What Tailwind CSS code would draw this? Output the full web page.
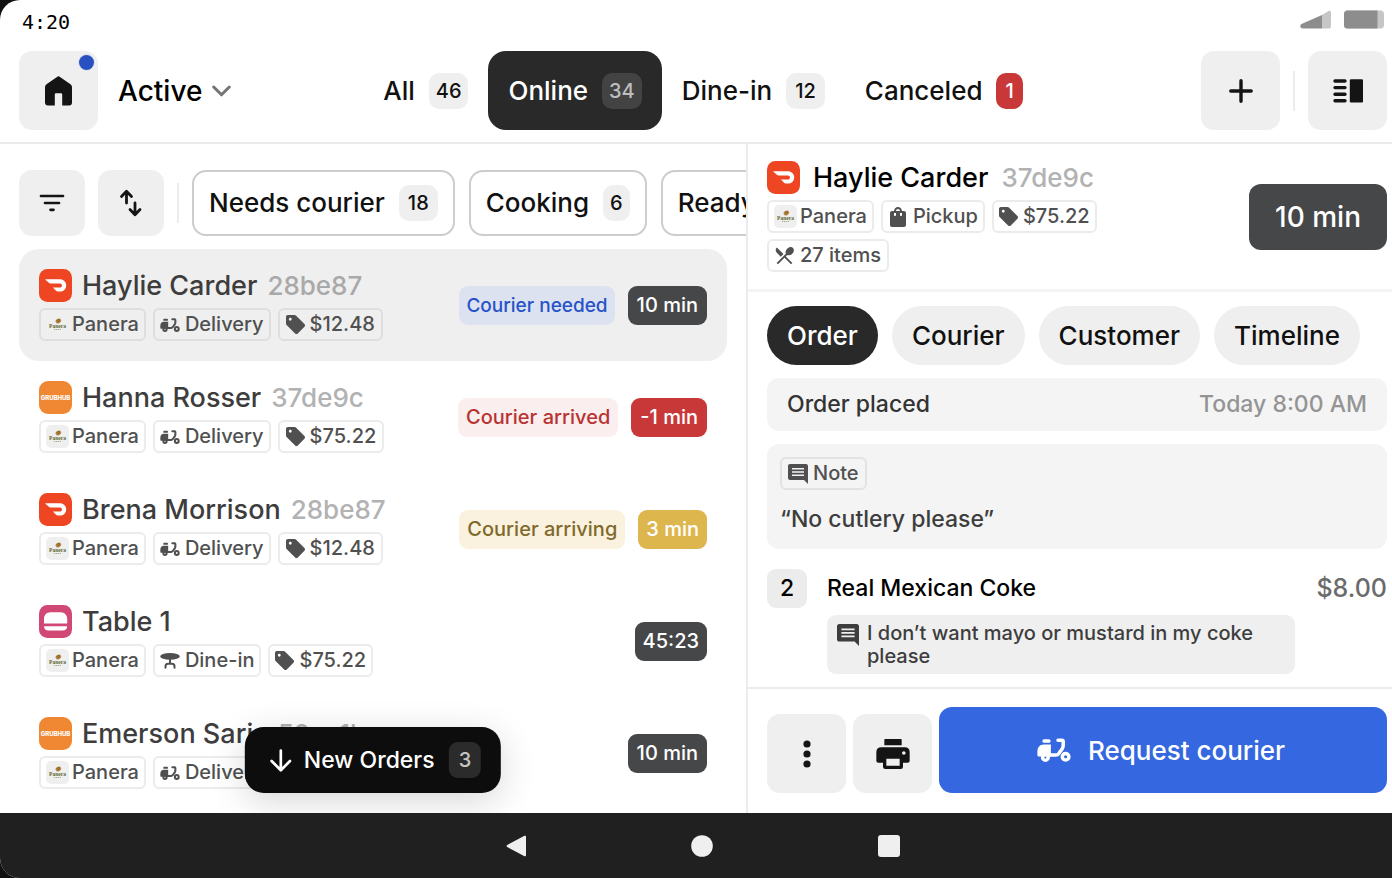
<!DOCTYPE html>
<html lang="en">
<head>
<meta charset="utf-8">
<meta name="viewport" content="width=device-width, initial-scale=1">
<title>Orders</title>
<script src="https://cdn.jsdelivr.net/npm/@tailwindcss/browser@4"></script>
</head>
<body class="bg-[#111] font-[Inter,sans-serif] font-medium text-[#111]">
<svg class="hidden">
  <symbol id="scooter" viewBox="0 0 34 24">
    <rect x="5.5" y="1.2" width="8" height="3.6" rx="1.5" fill="currentColor"/>
    <path d="M6.5 6.4H13.9V18.6H2C.8 18.6.4 17.8.4 16.800V13.200C.4 9.200 3 6.400 6.500 6.400Z" fill="currentColor"/>
    <g fill="none" stroke="currentColor" stroke-width="3.500" stroke-linecap="round" stroke-linejoin="round">
      <circle cx="8.400" cy="19.400" r="2.800"/>
      <path d="M21 2.200H24.800Q26.200 2.200 26.200 3.600V7.600Q26.200 9 25.400 10.400L21.600 15.800Q20.600 17 19 17H12"/>
      <circle cx="28.600" cy="18.800" r="3.300"/>
    </g>
  </symbol>
  <symbol id="tag" viewBox="2 2 20 20"><path fill="currentColor" d="M21.410 11.580l-9-9C12.050 2.220 11.550 2 11 2H4c-1.100 0-2 .9-2 2v7c0 .55.22 1.050.59 1.420l9 9c.36.36.86.58 1.410.58.55 0 1.050-.22 1.410-.59l7-7c.37-.36.59-.86.59-1.410 0-.55-.23-1.060-.59-1.420zM6.500 8C5.670 8 5 7.330 5 6.500S5.670 5 6.500 5 8 5.670 8 6.500 7.330 8 6.500 8z"/></symbol>
  <symbol id="comment" viewBox="2 2 20 20"><path fill="currentColor" d="M21.990 4c0-1.100-.89-2-1.990-2H4c-1.100 0-2 .9-2 2v12c0 1.100.9 2 2 2h14l4 4-.01-18zM18 14H6v-1.600h12V14zm0-3.200H6V9.200h12v1.600zm0-3.200H6V6h12v1.600z"/></symbol>
  <symbol id="table" viewBox="0 0 20 16">
    <ellipse cx="10" cy="3.400" rx="9.800" ry="3.300" fill="currentColor"/>
    <path d="M10 5V10.500M5.500 14.800V13.400Q5.500 10.800 8 10.800H12Q14.500 10.800 14.500 13.400V14.800" fill="none" stroke="currentColor" stroke-width="2" stroke-linecap="round"/>
  </symbol>
  <symbol id="doordash" viewBox="0 0 33 33">
    <rect width="33" height="33" rx="8.500" fill="#ee4523"/>
    <path fill="#fff" d="M6.600 10.300H20.500C24.500 10.300 27.200 13 27.200 16.400C27.200 19.900 24.400 22.600 20.800 22.600H18.600C18.100 22.600 17.700 22.400 17.300 22.100L13.900 18.600H20.700C22.100 18.600 23 17.700 23 16.500C23 15.300 22.100 14.500 20.700 14.500H11.600C10.900 14.500 10.400 14.300 9.900 13.800L6.400 10.800C6.200 10.600 6.300 10.300 6.600 10.300Z"/>
  </symbol>
  <symbol id="burger" viewBox="0 0 33 33">
    <rect width="33" height="33" rx="8.500" fill="#d14874"/>
    <path fill="#fff" d="M5 18.600V14C5 10 7.500 7.200 11.500 7.200H21.500C25.500 7.200 28.200 10 28.200 14V18.600ZM5 21.200H28.200Q28 25.600 23.500 25.600H9.700Q5.200 25.600 5 21.200Z"/>
  </symbol>
  <symbol id="panera" viewBox="0 0 23 23">
    <rect width="23" height="23" rx="5" fill="#efefef"/>
    <ellipse cx="12.400" cy="8" rx="2.900" ry="2.200" transform="rotate(-30 12.400 8)" fill="#b98545"/>
    <path d="M10.800 7.300L13.300 6.500M11.500 8.900L14 7.600" stroke="#7a4b22" stroke-width=".7"/>
    <text x="11.500" y="14.600" text-anchor="middle" font-family="Liberation Serif, serif" font-weight="700" font-size="5.500" fill="#5f6b35">Panera</text>
    <path d="M8 16.500H15.500" stroke="#a9ad90" stroke-width="1" stroke-dasharray="1.300 .6"/>
  </symbol>
</svg>

<div class="flex h-screen flex-col overflow-hidden rounded-l-[20px] bg-white">
  <div class="flex h-[39px] shrink-0 items-center justify-between pl-[22px] pr-2">
    <span class="mt-1 font-['DejaVu_Sans_Mono',monospace] text-[20px] font-normal leading-none text-black">4:20</span>
    <div class="flex gap-3">
      <svg class="h-[19px] w-8" viewBox="0 0 32 19"><path d="M1.500 14L22 5V18.500H3Q.3 18.500.3 16Q.3 14.500 1.500 14Z" fill="#8d8d8d"/><path d="M22 5L28.500 1Q31 0 31 3V16Q31 18.500 29 18.500H22Z" fill="#c6c6c6"/></svg>
      <svg class="h-[19px] w-10" viewBox="0 0 40 19"><rect y=".5" width="40" height="18" rx="3.500" fill="#c6c6c6"/><path d="M3.500.500H33.500V18.500H3.500Q0 18.500 0 15V4Q0 .5 3.500.500Z" fill="#8d8d8d"/></svg>
    </div>
  </div>

  <header class="grid shrink-0 grid-cols-[1fr_auto_1fr] items-center border-b-2 border-[#ebebeb] pb-3 pl-[19px] pr-[5px] pt-3">
    <div class="flex items-center gap-5">
      <button aria-label="Home" class="relative flex size-[79px] items-center justify-center rounded-[13px] bg-[#efefef]">
        <svg class="h-[30px] w-[27px]" viewBox="0 0 27 30"><path fill="#141414" d="M12 .9Q13.500-.2 15 .9L25.500 8.300Q27 9.400 27 11.200V26.500Q27 29.500 24 29.500H17.200V18.500Q17.200 17.300 16 17.300H11Q9.800 17.300 9.800 18.500V29.500H3Q0 29.500 0 26.500V11.200Q0 9.400 1.500 8.300Z"/></svg>
        <span class="absolute right-1 top-1 size-[15px] rounded-full bg-[#2850c0] ring-1 ring-[#dfe2ea]"></span>
      </button>
      <button class="flex items-center gap-[10px] text-[28px] leading-8 text-black">Active
        <svg class="h-3 w-[19px]" viewBox="0 0 19 12"><path d="M1.700 2L9.500 9.800L17.300 2" fill="none" stroke="#757575" stroke-width="3" stroke-linecap="round" stroke-linejoin="round"/></svg>
      </button>
    </div>
    <nav class="flex text-[26px] leading-8">
      <button class="flex h-[79px] items-center gap-[14px] rounded-[18px] px-5">All <span class="rounded-[10px] bg-[#efefef] px-[7px] py-1 text-[20px] leading-7">46</span></button>
      <button class="flex h-[79px] items-center gap-[14px] rounded-[18px] bg-[#292929] px-5 text-white">Online <span class="rounded-[10px] bg-[#434343] px-[7px] py-1 text-[20px] leading-7 text-[#bdbdbd]">34</span></button>
      <button class="flex h-[79px] items-center gap-[14px] rounded-[18px] px-5">Dine-in <span class="rounded-[10px] bg-[#efefef] px-[9px] py-1 text-[20px] leading-7">12</span></button>
      <button class="flex h-[79px] items-center gap-[14px] rounded-[18px] px-5">Canceled <span class="rounded-[10px] bg-[#c93838] px-[9px] py-1 text-[20px] leading-7 text-white">1</span></button>
    </nav>
    <div class="flex items-center justify-end gap-[13px]">
      <button aria-label="New order" class="flex size-[79px] items-center justify-center rounded-[13px] bg-[#efefef]"><svg class="size-6" viewBox="0 0 24 24"><path d="M12 1.800V22.200M1.800 12H22.200" stroke="#141414" stroke-width="3.400" stroke-linecap="round"/></svg></button>
      <span class="h-10 w-[2px] bg-[#ececec]"></span>
      <button aria-label="Toggle panel" class="flex size-[79px] items-center justify-center rounded-[13px] bg-[#efefef]"><svg class="h-6 w-[30px]" viewBox="0 0 30 24"><path d="M2 2H12M2 8.600H12M2 15.200H12M2 21.800H12" stroke="#141414" stroke-width="3.400" stroke-linecap="round"/><rect x="16.800" y=".3" width="13.200" height="23.200" rx="1.200" fill="#141414"/></svg></button>
    </div>
  </header>

  <main class="grid min-h-0 flex-1 grid-cols-[748fr_644fr]">
    <section class="relative flex min-w-0 flex-col overflow-hidden border-r-2 border-[#ebebeb] pt-[26px]">
      <div class="flex shrink-0 items-center gap-[13px] overflow-hidden pl-[19px]">
        <button aria-label="Filter" class="flex size-[66px] shrink-0 items-center justify-center rounded-[13px] bg-[#efefef]"><svg class="h-[18px] w-[26px]" viewBox="0 0 26 18"><path d="M2 2H24M6 9H20M11.500 15.800H14.500" stroke="#141414" stroke-width="2.700" stroke-linecap="round"/></svg></button>
        <button aria-label="Sort" class="flex size-[66px] shrink-0 items-center justify-center rounded-[13px] bg-[#efefef]"><svg class="h-7 w-6" viewBox="0 0 24 28"><path d="M7.500 14V2.500M2.500 7.500L7.500 2.300L12.500 7.500M16 14V25.500M11 20.500L16 25.700L21 20.500" fill="none" stroke="#141414" stroke-width="2.800" stroke-linecap="round" stroke-linejoin="round"/></svg></button>
        <span class="h-10 w-[2px] shrink-0 bg-[#ececec]"></span>
        <div class="flex gap-[14px] text-[26px] leading-8">
          <button class="flex h-[66px] shrink-0 items-center gap-[14px] whitespace-nowrap rounded-[14px] border-2 border-[#cdcdcd] px-[15px]">Needs courier <span class="rounded-[10px] bg-[#efefef] px-[9px] py-1 text-[20px] leading-7">18</span></button>
          <button class="flex h-[66px] shrink-0 items-center gap-[14px] whitespace-nowrap rounded-[14px] border-2 border-[#cdcdcd] px-[15px]">Cooking <span class="rounded-[10px] bg-[#efefef] px-[7px] py-1 text-[20px] leading-7">6</span></button>
          <button class="flex h-[66px] shrink-0 items-center gap-[14px] whitespace-nowrap rounded-[14px] border-2 border-[#cdcdcd] px-[15px]">Ready</button>
        </div>
      </div>

      <ul class="mt-[13px] flex flex-col px-[19px] text-[#3d3d3d]">
        <li class="flex h-28 shrink-0 items-center justify-between rounded-[20px] bg-[#efefef] px-5">
          <div class="flex flex-col gap-[6px]">
            <div class="flex items-center gap-[10px]"><svg class="size-[33px]"><use href="#doordash"/></svg><h2 class="text-[27px] leading-[33px]">Haylie Carder</h2><span class="text-[26px] leading-[33px] text-[#a9a9a9]">28be87</span></div>
            <div class="flex gap-[7px] text-[20px] leading-[29px] text-[#505050]">
              <span class="flex items-center gap-[3px] rounded-[6px] border-2 border-[#dedede] px-[5px]"><svg class="size-[23px]"><use href="#panera"/></svg>Panera</span>
              <span class="flex items-center gap-[5px] rounded-[6px] border-2 border-[#dedede] px-[5px]"><svg class="h-[14px] w-5"><use href="#scooter"/></svg>Delivery</span>
              <span class="flex items-center gap-[5px] rounded-[6px] border-2 border-[#dedede] px-[6px]"><svg class="size-[19px]"><use href="#tag"/></svg>$12.48</span>
            </div>
          </div>
          <div class="flex gap-[13px] text-[20px] leading-[39px]"><span class="rounded-[9px] bg-[#dce2ef] px-[7px] text-[19px] text-[#2653c8]">Courier needed</span><span class="rounded-[9px] bg-[#464749] px-[9px] text-white">10 min</span></div>
        </li>
        <li class="flex h-28 shrink-0 items-center justify-between px-5">
          <div class="flex flex-col gap-[6px]">
            <div class="flex items-center gap-[10px]"><span class="flex size-[33px] items-center justify-center rounded-[9px] bg-[#f08833] text-[6px] font-extrabold text-white">GRUBHUB</span><h2 class="text-[27px] leading-[33px]">Hanna Rosser</h2><span class="text-[26px] leading-[33px] text-[#b2b2b2]">37de9c</span></div>
            <div class="flex gap-[7px] text-[20px] leading-[29px] text-[#505050]">
              <span class="flex items-center gap-[3px] rounded-[6px] border-2 border-[#ebebeb] px-[5px]"><svg class="size-[23px]"><use href="#panera"/></svg>Panera</span>
              <span class="flex items-center gap-[5px] rounded-[6px] border-2 border-[#ebebeb] px-[5px]"><svg class="h-[14px] w-5"><use href="#scooter"/></svg>Delivery</span>
              <span class="flex items-center gap-[5px] rounded-[6px] border-2 border-[#ebebeb] px-[6px]"><svg class="size-[19px]"><use href="#tag"/></svg>$75.22</span>
            </div>
          </div>
          <div class="flex gap-[13px] text-[20px] leading-[39px]"><span class="rounded-[9px] bg-[#faeeee] px-2 text-[#b83232]">Courier arrived</span><span class="rounded-[9px] bg-[#c93838] px-[9px] text-white">-1 min</span></div>
        </li>
        <li class="flex h-28 shrink-0 items-center justify-between px-5">
          <div class="flex flex-col gap-[6px]">
            <div class="flex items-center gap-[10px]"><svg class="size-[33px]"><use href="#doordash"/></svg><h2 class="text-[27px] leading-[33px]">Brena Morrison</h2><span class="text-[26px] leading-[33px] text-[#b2b2b2]">28be87</span></div>
            <div class="flex gap-[7px] text-[20px] leading-[29px] text-[#505050]">
              <span class="flex items-center gap-[3px] rounded-[6px] border-2 border-[#ebebeb] px-[5px]"><svg class="size-[23px]"><use href="#panera"/></svg>Panera</span>
              <span class="flex items-center gap-[5px] rounded-[6px] border-2 border-[#ebebeb] px-[5px]"><svg class="h-[14px] w-5"><use href="#scooter"/></svg>Delivery</span>
              <span class="flex items-center gap-[5px] rounded-[6px] border-2 border-[#ebebeb] px-[6px]"><svg class="size-[19px]"><use href="#tag"/></svg>$12.48</span>
            </div>
          </div>
          <div class="flex gap-[13px] text-[20px] leading-[39px]"><span class="rounded-[9px] bg-[#faf2de] px-2 text-[#80692b]">Courier arriving</span><span class="rounded-[9px] bg-[#ddb64e] px-2 text-white">3 min</span></div>
        </li>
        <li class="flex h-28 shrink-0 items-center justify-between px-5">
          <div class="flex flex-col gap-[6px]">
            <div class="flex items-center gap-[10px]"><svg class="size-[33px]"><use href="#burger"/></svg><h2 class="text-[27px] leading-[33px]">Table 1</h2></div>
            <div class="flex gap-[7px] text-[20px] leading-[29px] text-[#505050]">
              <span class="flex items-center gap-[3px] rounded-[6px] border-2 border-[#ebebeb] px-[5px]"><svg class="size-[23px]"><use href="#panera"/></svg>Panera</span>
              <span class="flex items-center gap-[5px] rounded-[6px] border-2 border-[#ebebeb] px-[5px]"><svg class="h-4 w-5"><use href="#table"/></svg>Dine-in</span>
              <span class="flex items-center gap-[5px] rounded-[6px] border-2 border-[#ebebeb] px-[5px]"><svg class="size-[19px]"><use href="#tag"/></svg>$75.22</span>
            </div>
          </div>
          <span class="rounded-[9px] bg-[#464749] px-2 text-[20px] leading-[39px] text-white">45:23</span>
        </li>
        <li class="flex h-28 shrink-0 items-center justify-between px-5">
          <div class="flex flex-col gap-[6px]">
            <div class="flex items-center gap-[10px]"><span class="flex size-[33px] items-center justify-center rounded-[9px] bg-[#f08833] text-[6px] font-extrabold text-white">GRUBHUB</span><h2 class="text-[27px] leading-[33px]">Emerson Saris</h2><span class="text-[26px] leading-[33px] text-[#b2b2b2]">52ce1b</span></div>
            <div class="flex gap-[7px] text-[20px] leading-[29px] text-[#505050]">
              <span class="flex items-center gap-[3px] rounded-[6px] border-2 border-[#ebebeb] px-[5px]"><svg class="size-[23px]"><use href="#panera"/></svg>Panera</span>
              <span class="flex items-center gap-[5px] rounded-[6px] border-2 border-[#ebebeb] px-[5px]"><svg class="h-[14px] w-5"><use href="#scooter"/></svg>Delivery</span>
            </div>
          </div>
          <span class="rounded-[9px] bg-[#464749] px-[9px] text-[20px] leading-[39px] text-white">10 min</span>
        </li>
      </ul>

      <button class="absolute bottom-5 left-1/2 flex h-[66px] -translate-x-1/2 items-center whitespace-nowrap rounded-[19px] bg-[#0d0d0d] pl-[25px] pr-5 text-[23px] leading-8 text-white shadow-[0_8px_36px_rgba(0,0,0,0.16)]">
        <svg class="mr-3 h-[23px] w-[22px]" viewBox="0 0 22 23"><path d="M11 1.500V21M1.800 12L11 21.200L20.200 12" fill="none" stroke="#fff" stroke-width="2.700" stroke-linecap="round" stroke-linejoin="round"/></svg>New Orders<span class="ml-[14px] rounded-[9px] bg-[#2b2b2b] px-[10px] py-1 text-[20px] leading-7 text-[#c4c4c4]">3</span>
      </button>
    </section>

    <section class="flex min-w-0 flex-col pl-[19px] pr-[5px]">
      <div class="-ml-[19px] -mr-[5px] flex h-[148px] shrink-0 items-center justify-between gap-5 border-b-3 border-[#f3f3f3] pl-[19px] pr-[5px]">
        <div class="flex flex-col gap-[6px]">
          <div class="flex items-center gap-[13px]"><svg class="size-[33px]"><use href="#doordash"/></svg><h1 class="text-[27px] leading-[33px] text-black">Haylie Carder</h1><span class="text-[26px] leading-[33px] text-[#b2b2b2]">37de9c</span></div>
          <div class="flex max-w-[340px] flex-wrap gap-x-[7px] gap-y-[6px] text-[20px] leading-[29px] text-[#505050]">
            <span class="flex items-center gap-[3px] rounded-[6px] border-2 border-[#ebebeb] px-[5px]"><svg class="size-[23px]"><use href="#panera"/></svg>Panera</span>
            <span class="flex items-center gap-[5px] rounded-[6px] border-2 border-[#ebebeb] px-[5px]"><svg class="h-5 w-5" viewBox="2 2 20 20"><path fill="currentColor" d="M18 6h-2c0-2.210-1.790-4-4-4S8 3.790 8 6H6c-1.100 0-2 .9-2 2v12c0 1.100.9 2 2 2h12c1.100 0 2-.9 2-2V8c0-1.100-.9-2-2-2zm-8 4c0 .55-.45 1-1 1s-1-.45-1-1V8h2v2zm2-6c1.100 0 2 .9 2 2h-4c0-1.100.9-2 2-2zm4 6c0 .55-.45 1-1 1s-1-.45-1-1V8h2v2z"/></svg>Pickup</span>
            <span class="flex items-center gap-[5px] rounded-[6px] border-2 border-[#ebebeb] px-[5px]"><svg class="size-[19px]"><use href="#tag"/></svg>$75.22</span>
            <span class="flex items-center gap-[6px] rounded-[6px] border-2 border-[#ebebeb] px-[6px]"><svg class="size-[19px]" viewBox="2 2 20 20"><path fill="currentColor" d="M8.100 13.340l2.830-2.830L3.910 3.500c-1.560 1.560-1.560 4.090 0 5.660l4.190 4.180zm6.780-1.810c1.530.71 3.680.21 5.270-1.380 1.910-1.910 2.280-4.650.81-6.120-1.460-1.460-4.200-1.100-6.120.81-1.590 1.590-2.090 3.740-1.380 5.270L3.700 19.870l1.410 1.410L12 14.410l6.880 6.880 1.410-1.410L13.410 13l1.470-1.470z"/></svg>27 items</span>
          </div>
        </div>
        <span class="shrink-0 rounded-[12px] bg-[#464749] px-[26px] text-[28px] leading-[66px] text-white">10 min</span>
      </div>

      <div class="flex min-h-0 flex-1 flex-col gap-[13px] overflow-hidden pt-[14px]">
        <div class="flex shrink-0 gap-[14px] text-[26px] leading-[59px]">
          <button class="rounded-full bg-[#292929] px-5 text-white">Order</button>
          <button class="rounded-full bg-[#efefef] px-5">Courier</button>
          <button class="rounded-full bg-[#efefef] px-5">Customer</button>
          <button class="rounded-full bg-[#efefef] px-5">Timeline</button>
        </div>
        <div class="flex shrink-0 justify-between rounded-[12px] bg-[#f4f4f4] px-5 text-[23px] leading-[53px] text-[#333]"><span>Order placed</span><span class="text-[#949494]">Today 8:00 AM</span></div>
        <div class="flex shrink-0 flex-col items-start gap-[13px] rounded-[12px] bg-[#f4f4f4] p-[13px] text-[#3d3d3d]">
          <span class="flex items-center gap-[5px] rounded-[6px] border-2 border-[#e2e2e2] px-[6px] text-[20px] leading-[29px] text-[#505050]"><svg class="size-5"><use href="#comment"/></svg>Note</span>
          <p class="text-[23px] leading-[33px]">“No cutlery please”</p>
        </div>
        <div class="flex shrink-0 items-start gap-5 pt-[7px]">
          <span class="flex h-[39px] w-10 items-center justify-center rounded-[9px] bg-[#ececec] text-[23px] text-black">2</span>
          <div class="flex flex-1 flex-col items-start gap-[7px]">
            <div class="flex w-full justify-between leading-[39px]"><h3 class="text-[23px] text-black">Real Mexican Coke</h3><span class="text-[25px] text-[#6b6b6b]">$8.00</span></div>
            <div class="flex w-[468px] gap-2 rounded-[9px] bg-[#efefef] px-[10px] pb-[6px] pt-[7px] text-[20px] leading-[23px] text-[#3d3d3d]"><svg class="mt-[2px] size-[22px] shrink-0"><use href="#comment"/></svg><p>I don’t want mayo or mustard in my coke please</p></div>
          </div>
        </div>
      </div>

      <div class="-ml-[19px] -mr-[5px] flex shrink-0 items-end gap-[7px] border-t-2 border-[#ebebeb] pb-5 pl-[19px] pr-[5px] pt-[18px]">
        <button aria-label="More" class="flex size-[79px] items-center justify-center rounded-[13px] bg-[#efefef]"><svg class="h-9 w-2" viewBox="0 0 8 36"><g fill="#141414"><circle cx="4" cy="8" r="3.600"/><circle cx="4" cy="18" r="3.600"/><circle cx="4" cy="28" r="3.600"/></g></svg></button>
        <button aria-label="Print" class="flex size-[79px] items-center justify-center rounded-[13px] bg-[#efefef]"><svg class="size-10" viewBox="0 0 24 24"><path fill="#141414" fill-rule="evenodd" d="M7.200 3H16.800Q17.200 3 17.200 3.400V6.700H6.800V3.400Q6.800 3 7.200 3ZM5 8H19Q22 8 22 11V16Q22 17.200 20.800 17.200H18V19.500Q18 21 16.500 21H7.500Q6 21 6 19.500V17.200H3.200Q2 17.200 2 16V11Q2 8 5 8ZM8 14.800V19H16V14.800ZM18.500 10.300A1.100 1.100 0 1 0 18.500 12.500A1.100 1.100 0 1 0 18.500 10.300Z"/></svg></button>
        <button class="flex h-[86px] flex-1 items-center justify-center gap-[17px] rounded-[13px] bg-[#3568e0] pr-1 text-[26px] text-white"><svg class="h-6 w-[34px]"><use href="#scooter"/></svg>Request courier</button>
      </div>
    </section>
  </main>

  <footer class="flex h-[65px] shrink-0 items-center justify-center gap-[165px] bg-[#202020] pl-3">
    <button aria-label="Back"><svg class="size-[22px]" viewBox="0 0 22 22"><path d="M3.200 10Q1.800 11 3.200 12L20.500 21.200Q22 21.800 22 20.200V1.800Q22 .2 20.500.800Z" fill="#efefef"/></svg></button>
    <button aria-label="Home screen"><svg class="size-[22px]" viewBox="0 0 22 22"><circle cx="11" cy="11" r="10.800" fill="#efefef"/></svg></button>
    <button aria-label="Recent apps"><svg class="size-[22px]" viewBox="0 0 22 22"><rect width="22" height="22" rx="3" fill="#efefef"/></svg></button>
  </footer>
</div>
</body>
</html>
